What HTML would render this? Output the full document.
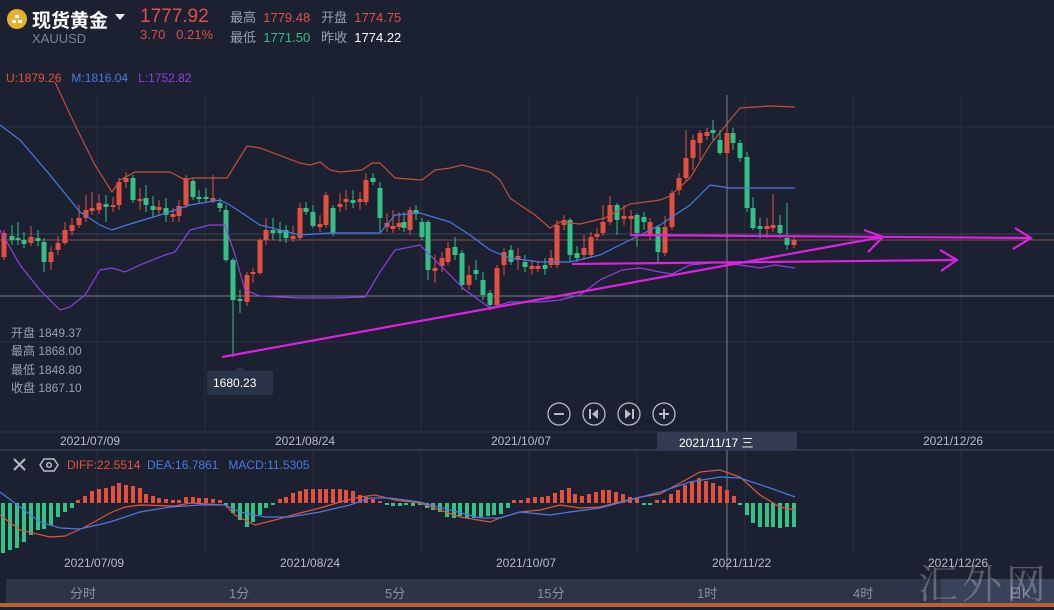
<!DOCTYPE html>
<html><head><meta charset="utf-8"><style>
body{margin:0;background:#1b2131;width:1054px;height:607px;overflow:hidden;position:relative;font-family:"Liberation Sans","Noto Sans CJK SC",sans-serif}
.t{position:absolute;white-space:nowrap}
svg{position:absolute;left:0;top:0}
</style></head><body>
<svg id="s" width="1054" height="607" xmlns="http://www.w3.org/2000/svg">
<g stroke="#283043" stroke-width="1">
<line x1="97" y1="95" x2="97" y2="432"/><line x1="205" y1="95" x2="205" y2="432"/><line x1="313" y1="95" x2="313" y2="432"/><line x1="421" y1="95" x2="421" y2="432"/><line x1="529" y1="95" x2="529" y2="432"/><line x1="637" y1="95" x2="637" y2="432"/><line x1="745" y1="95" x2="745" y2="432"/><line x1="853" y1="95" x2="853" y2="432"/><line x1="961" y1="95" x2="961" y2="432"/>
<line x1="97" y1="452" x2="97" y2="552"/><line x1="205" y1="452" x2="205" y2="552"/><line x1="313" y1="452" x2="313" y2="552"/><line x1="421" y1="452" x2="421" y2="552"/><line x1="529" y1="452" x2="529" y2="552"/><line x1="637" y1="452" x2="637" y2="552"/><line x1="745" y1="452" x2="745" y2="552"/><line x1="853" y1="452" x2="853" y2="552"/><line x1="961" y1="452" x2="961" y2="552"/>
<line x1="0" y1="127" x2="1054" y2="127"/><line x1="0" y1="234" x2="1054" y2="234" stroke="#3a4256"/><line x1="0" y1="342" x2="1054" y2="342"/>
</g>
<line x1="0" y1="240" x2="1054" y2="240" stroke="#8a4a4a"/>
<line x1="0" y1="296" x2="1054" y2="296" stroke="#7a8090"/>
<line x1="727" y1="95" x2="727" y2="570" stroke="#7a8090"/>
<line x1="0" y1="450" x2="1054" y2="450" stroke="#454d60"/>
<line x1="0" y1="432" x2="1054" y2="432" stroke="#2e3648"/>
<g id="cd"></g>
<g fill="none" stroke-width="1.2">
<polyline stroke="#c0503c" points="55,82 75,125 95,165 112,192 120,180 135,172 170,172 185,180 193,178 227,178 247,146 260,148 300,163 310,165 320,162 330,170 340,172 362,170 372,163 380,163 395,178 422,180 435,170 450,168 462,165 490,172 500,180 510,198 520,205 535,215 550,228 560,222 580,224 605,218 630,204 660,200 670,196 690,178 710,145 730,120 740,108 770,106 795,107"/>
<polyline stroke="#4a7ae0" points="0,125 20,140 50,175 80,212 100,225 112,230 130,224 160,215 190,205 220,200 230,205 260,225 300,235 330,233 360,233 380,233 395,215 420,213 450,222 470,235 490,250 510,258 540,262 570,262 600,255 630,240 660,225 690,205 710,185 730,188 795,188"/>
<polyline stroke="#9040e0" points="0,230 20,265 40,290 60,310 70,307 85,295 100,270 112,268 125,272 140,265 165,255 175,252 190,230 210,225 225,225 235,255 245,290 260,296 300,298 330,298 365,297 380,272 395,250 420,245 445,270 465,290 490,308 510,302 540,302 560,300 580,295 600,280 622,270 640,268 660,272 672,274 690,265 720,262 740,265 760,268 775,265 795,268"/>
</g>
<g stroke="#e020e0" stroke-width="2.2" fill="none">
<line x1="222" y1="357" x2="883" y2="237"/>
<polyline points="864,230 883,237 868,252"/>
<line x1="630" y1="235" x2="1031" y2="238"/>
<polyline points="1015,228 1031,238 1013,249"/>
<line x1="572" y1="264" x2="957" y2="260"/>
<polyline points="940,250 957,260 941,271"/>
</g>
<rect x="207" y="371" width="66" height="24" rx="2" fill="#2a3247"/>
<polygon points="235,371 240,366 245,371" fill="#2a3247"/>
<g fill="none" stroke="#b8bcc6" stroke-width="1.3">
<circle cx="559" cy="414" r="11"/><circle cx="594" cy="414" r="11"/><circle cx="629" cy="414" r="11"/><circle cx="664" cy="414" r="11"/>
<line x1="554" y1="414" x2="564" y2="414" stroke-width="2"/><line x1="659" y1="414" x2="669" y2="414" stroke-width="2"/><line x1="664" y1="409" x2="664" y2="419" stroke-width="2"/>
<line x1="590" y1="409" x2="590" y2="419" stroke-width="2"/><line x1="633" y1="409" x2="633" y2="419" stroke-width="2"/>
</g>
<polygon points="598,409 592,414 598,419" fill="#b8bcc6"/><polygon points="625,409 631,414 625,419" fill="#b8bcc6"/>
<rect x="657" y="432" width="140" height="18" fill="#323b52"/>
<g id="mh"></g>
<g fill="none" stroke-width="1.2">
<polyline stroke="#e0533c" points="0,515 20,530 50,537 65,536 85,527 110,513 125,507 140,505 175,506 190,503 225,505 235,515 255,525 275,520 300,513 320,508 340,502 360,497 375,495 395,500 420,503 440,510 460,517 490,522 500,518 520,512 540,510 560,505 580,508 600,507 620,502 640,497 660,494 680,483 700,472 720,470 740,477 760,495 780,507 795,510"/>
<polyline stroke="#4a7ae0" points="0,492 20,507 40,522 60,528 80,529 110,522 140,512 170,507 200,505 225,505 240,512 265,517 290,517 320,512 350,505 370,498 390,498 420,502 450,510 480,518 500,518 520,512 550,515 570,512 600,508 630,500 660,492 690,482 720,477 740,478 770,488 795,497"/>
</g>
<g stroke="#b8bcc6" stroke-width="2"><line x1="14" y1="459" x2="25" y2="470"/><line x1="25" y1="459" x2="14" y2="470"/></g>
<polygon points="44,459 54,459 58,465 54,471 44,471 40,465" fill="none" stroke="#b8bcc6" stroke-width="1.5"/><circle cx="49" cy="465" r="2.3" fill="none" stroke="#b8bcc6" stroke-width="1.5"/>
<rect x="6" y="579" width="1048" height="24" fill="#2c3548"/>
<rect x="941" y="579" width="113" height="24" fill="#38425a"/>
<rect x="0" y="603" width="1054" height="4" fill="#c0602a"/>
<circle cx="17" cy="19" r="10" fill="#e8b030"/>
<g fill="#fff"><rect x="12" y="20" width="4" height="3"/><rect x="18" y="20" width="4" height="3"/><rect x="15" y="15" width="4" height="3"/></g>
<polygon points="115,14 125,14 120,20" fill="#e8eaee"/>
</svg>
<div class="t" style="left:32px;top:6px;font-size:19px;color:#fff;font-weight:bold">现货黄金</div>
<div class="t" style="left:32px;top:31px;font-size:13px;color:#7c8290">XAUUSD</div>
<div class="t" style="left:140px;top:6px;font-size:19px;color:#e0504a">1777.92</div>
<div class="t" style="left:140px;top:27px;font-size:13px;color:#e0504a">3.70&nbsp;&nbsp;&nbsp;0.21%</div>
<div class="t" style="left:230px;top:7px;font-size:13px;color:#9aa0ab">最高&nbsp;&nbsp;<span style="color:#e0504a">1779.48</span>&nbsp;&nbsp;&nbsp;开盘&nbsp;&nbsp;<span style="color:#e0504a">1774.75</span></div>
<div class="t" style="left:230px;top:27px;font-size:13px;color:#9aa0ab">最低&nbsp;&nbsp;<span style="color:#3cba8a">1771.50</span>&nbsp;&nbsp;&nbsp;昨收&nbsp;&nbsp;<span style="color:#fff">1774.22</span></div>
<div class="t" style="left:6px;top:71px;font-size:12px;color:#e0533c">U:1879.26&nbsp;&nbsp;&nbsp;<span style="color:#4a7ae0">M:1816.04</span>&nbsp;&nbsp;&nbsp;<span style="color:#9040e0">L:1752.82</span></div>
<div class="t" style="left:11px;top:324px;font-size:12px;color:#9aa0ab;line-height:18.3px">开盘 1849.37<br>最高 1868.00<br>最低 1848.80<br>收盘 1867.10</div>
<div class="t" style="left:213px;top:376px;font-size:12px;color:#fff">1680.23</div>
<div class="t" style="left:60px;top:434px;font-size:12px;color:#b8bcc6">2021/07/09</div>
<div class="t" style="left:275px;top:434px;font-size:12px;color:#b8bcc6">2021/08/24</div>
<div class="t" style="left:491px;top:434px;font-size:12px;color:#b8bcc6">2021/10/07</div>
<div class="t" style="left:679px;top:434px;font-size:12px;color:#fff">2021/11/17 三</div>
<div class="t" style="left:923px;top:434px;font-size:12px;color:#b8bcc6">2021/12/26</div>
<div class="t" style="left:67px;top:458px;font-size:12px;color:#e0533c">DIFF:22.5514&nbsp;&nbsp;<span style="color:#4a7ae0">DEA:16.7861&nbsp;&nbsp;&nbsp;MACD:11.5305</span></div>
<div class="t" style="left:64px;top:556px;font-size:12px;color:#b8bcc6">2021/07/09</div>
<div class="t" style="left:280px;top:556px;font-size:12px;color:#b8bcc6">2021/08/24</div>
<div class="t" style="left:496px;top:556px;font-size:12px;color:#b8bcc6">2021/10/07</div>
<div class="t" style="left:712px;top:556px;font-size:12px;color:#b8bcc6">2021/11/22</div>
<div class="t" style="left:928px;top:556px;font-size:12px;color:#b8bcc6">2021/12/26</div>
<div class="t" style="top:583px;left:0;width:1054px;font-size:13px;color:#8a90a0">
<span class="t" style="left:70px">分时</span><span class="t" style="left:229px">1分</span><span class="t" style="left:385px">5分</span><span class="t" style="left:537px">15分</span><span class="t" style="left:697px">1时</span><span class="t" style="left:853px">4时</span><span class="t" style="left:1009px">日K</span></div>
<div class="t" style="left:918px;top:553px;font-size:40px;color:rgba(200,200,200,0.35);font-family:'Noto Serif CJK SC',serif;letter-spacing:4px">汇外网</div>
<script>
var C=[[4,233,257,230,260,'r'],[12,236,240,225,245,'g'],[18,238,240,222,245,'g'],[24,240,244,232,248,'g'],[31,237,243,226,246,'r'],[38,238,241,230,246,'g'],[44,242,262,238,272,'g'],[51,252,262,246,270,'r'],[58,243,250,236,255,'r'],[65,230,243,222,245,'r'],[72,225,231,218,235,'r'],[79,218,225,205,228,'r'],[86,210,218,195,222,'r'],[92,208,211,192,215,'r'],[99,203,210,194,214,'r'],[106,204,207,195,222,'g'],[113,205,207,197,212,'r'],[119,182,205,178,210,'r'],[126,178,182,172,188,'r'],[133,178,200,175,203,'g'],[140,199,201,188,210,'r'],[146,198,205,185,212,'g'],[153,206,210,196,218,'g'],[159,207,210,200,216,'r'],[166,208,215,198,222,'g'],[173,214,217,208,222,'r'],[179,206,216,200,222,'r'],[186,178,205,175,208,'r'],[193,181,197,178,200,'g'],[199,197,199,190,204,'g'],[206,197,199,188,203,'g'],[213,198,201,175,203,'r'],[220,203,208,198,212,'g'],[226,210,260,205,262,'g'],[233,260,300,258,357,'g'],[240,299,301,290,313,'g'],[247,275,302,272,306,'r'],[253,272,274,268,283,'r'],[260,240,273,238,275,'r'],[266,230,240,218,245,'r'],[273,230,233,218,240,'g'],[280,230,233,222,242,'g'],[286,230,238,225,243,'g'],[293,236,239,226,242,'r'],[300,208,238,203,240,'r'],[306,208,212,202,215,'g'],[313,212,226,205,228,'g'],[320,224,227,215,232,'r'],[326,195,225,192,228,'r'],[333,208,233,205,236,'g'],[340,204,207,193,212,'r'],[346,199,202,190,210,'r'],[353,200,203,190,208,'g'],[360,199,202,192,210,'r'],[366,180,202,173,205,'r'],[373,178,182,173,185,'g'],[380,188,218,182,232,'g'],[387,223,227,213,232,'r'],[393,226,229,210,233,'r'],[399,223,227,212,230,'r'],[404,222,228,212,232,'g'],[410,210,230,207,235,'r'],[416,210,214,205,220,'g'],[422,222,237,218,240,'g'],[428,222,270,220,280,'g'],[435,268,271,255,283,'r'],[442,258,266,252,272,'r'],[448,248,262,242,265,'r'],[455,247,255,237,260,'g'],[462,253,285,250,290,'g'],[469,275,285,265,290,'r'],[476,270,274,260,280,'g'],[483,280,295,272,300,'g'],[490,293,305,290,310,'g'],[497,268,305,265,308,'r'],[504,252,265,248,275,'r'],[511,250,262,245,265,'g'],[518,256,260,248,270,'r'],[525,262,267,255,272,'g'],[532,266,269,260,275,'r'],[538,266,269,262,272,'r'],[545,265,269,258,275,'g'],[551,258,265,250,268,'r'],[557,225,265,220,268,'r'],[564,220,225,215,230,'r'],[570,220,255,218,262,'g'],[577,253,258,246,262,'g'],[584,248,255,235,260,'r'],[591,237,255,232,258,'r'],[597,234,237,228,240,'r'],[603,222,233,205,236,'r'],[610,205,222,196,225,'r'],[617,205,220,203,235,'g'],[624,216,219,205,225,'r'],[631,216,219,210,235,'r'],[637,215,233,213,247,'g'],[644,217,222,212,230,'g'],[650,222,235,218,240,'r'],[658,227,252,225,262,'g'],[665,227,253,216,256,'r'],[672,193,227,190,230,'r'],[679,178,190,173,195,'r'],[686,158,178,130,182,'r'],[693,140,158,135,170,'r'],[700,133,143,130,160,'r'],[707,132,136,128,140,'r'],[713,130,133,120,140,'g'],[720,140,153,130,155,'g'],[727,133,153,127,157,'r'],[733,133,143,128,150,'g'],[740,143,158,140,162,'g'],[747,157,208,152,212,'g'],[753,208,228,197,230,'g'],[760,226,229,218,238,'g'],[767,226,229,218,238,'r'],[773,225,228,194,232,'r'],[780,225,233,215,238,'g'],[787,238,245,203,250,'g'],[794,240,245,236,248,'r']];
var s='';C.forEach(function(c){var col=c[5]=='r'?'#e4503f':'#35c086';s+='<line x1="'+c[0]+'" y1="'+c[3]+'" x2="'+c[0]+'" y2="'+c[4]+'" stroke="'+col+'"/><rect x="'+(c[0]-2.5)+'" y="'+c[1]+'" width="5" height="'+Math.max(1.5,c[2]-c[1])+'" fill="'+col+'"/>';});
document.getElementById('cd').innerHTML=s;
var H=[[3,553],[10,550],[17,548],[24,542],[31,535],[38,530],[44,529],[51,525],[58,517],[65,512],[72,508],[78,500],[85,496],[92,491],[99,489],[106,488],[113,486],[119,483],[126,485],[133,486],[140,488],[146,494],[153,496],[159,498],[166,499],[173,500],[179,500],[186,497],[193,497],[199,498],[206,498],[213,499],[220,500],[226,505],[233,513],[240,520],[247,527],[253,522],[260,515],[266,508],[273,505],[280,499],[286,497],[293,493],[300,491],[306,489],[313,489],[320,489],[326,489],[333,489],[340,489],[346,490],[353,491],[360,495],[366,497],[373,499],[380,501],[387,505],[393,506],[400,506],[406,505],[413,506],[420,505],[427,508],[433,510],[440,512],[447,517],[454,518],[460,516],[467,518],[474,518],[481,517],[488,516],[494,515],[501,514],[508,508],[514,500],[521,500],[528,498],[535,497],[542,497],[548,496],[555,493],[562,490],[569,488],[575,494],[582,496],[589,494],[596,492],[603,490],[609,490],[616,492],[623,494],[630,497],[637,498],[644,505],[650,505],[657,500],[664,500],[671,494],[678,490],[685,485],[692,481],[699,478],[706,481],[713,483],[720,486],[727,490],[734,496],[740,505],[747,515],[753,523],[760,527],[767,527],[773,527],[780,528],[787,527],[794,527]];
var m='';H.forEach(function(h){var z=503,col=h[1]<z?'#e4503f':'#35c086',y=Math.min(h[1],z),ht=Math.max(2,Math.abs(h[1]-z));m+='<rect x="'+(h[0]-2)+'" y="'+y+'" width="4" height="'+ht+'" fill="'+col+'"/>';});
document.getElementById('mh').innerHTML=m;
</script>
</body></html>
